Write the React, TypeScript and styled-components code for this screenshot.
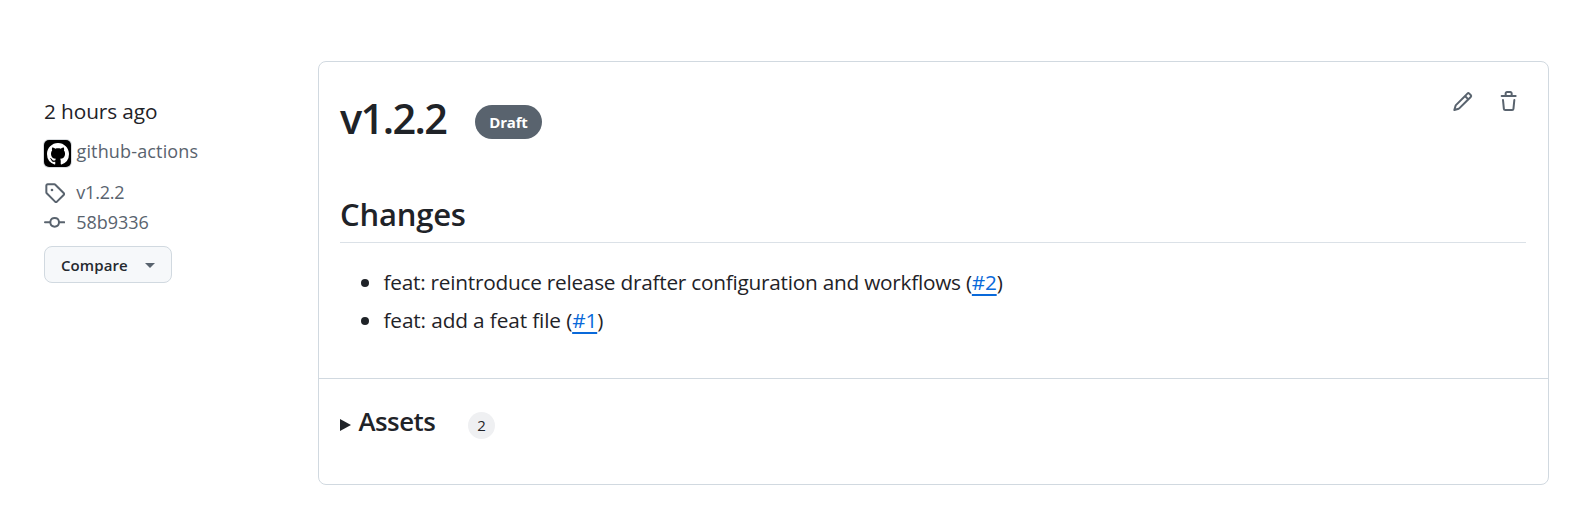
import React from "react";
import styled, { createGlobalStyle } from "styled-components";

const GlobalStyle = createGlobalStyle`
  * { box-sizing: border-box; }
  body {
    margin: 0;
    background: #fff;
    color: #1f2328;
    font-family: "Open Sans", "Noto Sans", sans-serif;
    font-size: 20.8px;
  }
`;

const Page = styled.main`
  display: flex;
  width: 1588px;
  height: 514px;
  padding: 61px 39px 0 44px;
`;

const Sidebar = styled.aside`
  width: 274px;
  flex: none;
  padding-top: 35px;
`;

const Time = styled.div`
  line-height: 30px;
  letter-spacing: -0.1px;
`;

const MetaRow = styled.div<{ $top?: number; $spacing?: number }>`
  display: flex;
  align-items: flex-start;
  gap: 11px;
  height: 29px;
  margin-top: ${(p) => p.$top ?? 0}px;
  color: #59636e;
  font-size: 18px;
  line-height: 28px;
  letter-spacing: ${(p) => p.$spacing ?? 0}px;

  svg {
    flex: none;
    margin-top: 4px;
  }
`;

const AuthorRow = styled(MetaRow)`
  gap: 5.5px;
`;

const Avatar = styled.span`
  display: flex;
  align-items: center;
  justify-content: center;
  flex: none;
  width: 27px;
  height: 27px;
  margin-top: 3px;
  border-radius: 5px;
  background: #000;
  box-shadow: 0 0 0 1px #d8dbde;
  color: #fff;

  svg {
    margin: 0;
  }
`;

const CompareButton = styled.button`
  display: flex;
  align-items: center;
  width: 128px;
  height: 37px;
  margin-top: 9px;
  padding: 1px 16px 0;
  border: 1px solid #d1d9e0;
  border-radius: 8px;
  background: #f6f8fa;
  color: #25292e;
  font: 600 15px/24px "Open Sans", "Noto Sans", sans-serif;
  letter-spacing: 0.1px;
  white-space: nowrap;
`;

const Caret = styled.span`
  margin-left: auto;
  margin-top: 1px;
  border: 5.5px solid transparent;
  border-top-color: #59636e;
  border-bottom: 0;
`;

const Card = styled.section`
  flex: none;
  width: 1231px;
  height: 424px;
  border: 1px solid #d1d9e0;
  border-radius: 8px;
`;

const Body = styled.div`
  height: 317px;
  padding: 0 22px 0 21px;
  border-bottom: 1px solid #d1d9e0;
`;

const Header = styled.header`
  display: flex;
  padding-top: 26px;
`;

const Title = styled.h1`
  margin: 0;
  width: 135px;
  font-size: 41.5px;
  font-weight: 600;
  line-height: 60px;
  letter-spacing: -1.6px;
`;

const DraftLabel = styled.span`
  display: flex;
  align-items: center;
  justify-content: center;
  width: 67px;
  height: 34px;
  margin-top: 17px;
  border-radius: 17px;
  background: #59636e;
  color: #fff;
  font-size: 15px;
  font-weight: 700;
  letter-spacing: -0.2px;
`;

const Actions = styled.div`
  display: flex;
  gap: 24px;
  margin-left: auto;
  padding: 3px 7px 0 0;
  color: #59636e;
`;

const SectionTitle = styled.h2`
  margin: 42px 0 0;
  height: 53px;
  border-bottom: 1px solid #dbe1e7;
  font-size: 31px;
  font-weight: 600;
  line-height: 48px;
  letter-spacing: -0.2px;
`;

const ChangeList = styled.ul`
  margin: 20px 0 0;
  padding: 0;
  list-style: none;
`;

const Change = styled.li<{ $spacing: number }>`
  display: flex;
  align-items: center;
  height: 38px;
  line-height: 38px;
  letter-spacing: ${(p) => p.$spacing}px;
  white-space: pre;

  &::before {
    content: "";
    width: 8px;
    height: 8px;
    margin: 2px 14.5px 0 21px;
    border-radius: 50%;
    background: #1f2328;
  }
`;

const IssueLink = styled.a`
  color: #0969da;
  text-decoration: underline;
  text-decoration-thickness: 2px;
  text-decoration-skip-ink: none;
  text-underline-offset: 4px;
`;

const Assets = styled.div`
  display: flex;
  align-items: flex-start;
  padding: 22px 0 0 21px;
`;

const Disclosure = styled.span`
  margin: 18px 7.5px 0 0;
  border: 6.5px solid transparent;
  border-left: 11px solid #1f2328;
  border-right: 0;
`;

const AssetsTitle = styled.h3`
  margin: 0;
  width: 109.5px;
  font-size: 25.8px;
  font-weight: 600;
  line-height: 40px;
  letter-spacing: -0.5px;
`;

const Counter = styled.span`
  width: 27px;
  height: 27px;
  margin-top: 11px;
  border-radius: 50%;
  background: #eff0f2;
  font-size: 15px;
  font-weight: 500;
  line-height: 27px;
  text-align: center;
`;

const icons = {
  mark: "M8 0c4.42 0 8 3.58 8 8a8.013 8.013 0 0 1-5.45 7.59c-.4.08-.55-.17-.55-.38 0-.27.01-1.13.01-2.2 0-.75-.25-1.23-.54-1.48 1.78-.2 3.65-.88 3.65-3.95 0-.88-.31-1.59-.82-2.15.08-.2.36-1.02-.08-2.12 0 0-.67-.22-2.2.82-.64-.18-1.32-.27-2-.27-.68 0-1.36.09-2 .27-1.53-1.03-2.2-.82-2.2-.82-.44 1.1-.16 1.92-.08 2.12-.51.56-.82 1.28-.82 2.15 0 3.06 1.86 3.75 3.64 3.95-.23.2-.44.55-.51 1.07-.46.21-1.61.55-2.33-.66-.15-.24-.6-.83-1.23-.82-.67.01-.27.38.01.53.34.19.73.9.82 1.13.16.45.68 1.31 2.69.94 0 .67.01 1.3.01 1.49 0 .21-.15.45-.55.38A7.995 7.995 0 0 1 0 8c0-4.42 3.58-8 8-8Z",
  tag: "M1 7.775V2.75C1 1.784 1.784 1 2.75 1h5.025c.464 0 .91.184 1.238.513l6.25 6.25a1.75 1.75 0 0 1 0 2.474l-5.026 5.026a1.75 1.75 0 0 1-2.474 0l-6.25-6.25A1.752 1.752 0 0 1 1 7.775Zm1.5 0c0 .066.026.13.073.177l6.25 6.25a.25.25 0 0 0 .354 0l5.025-5.025a.25.25 0 0 0 0-.354l-6.25-6.25a.25.25 0 0 0-.177-.073H2.75a.25.25 0 0 0-.25.25ZM6 5a1 1 0 1 1 0 2 1 1 0 0 1 0-2Z",
  commit: "M11.93 8.5a4.002 4.002 0 0 1-7.86 0H.75a.75.75 0 0 1 0-1.5h3.32a4.002 4.002 0 0 1 7.86 0h3.32a.75.75 0 0 1 0 1.5Zm-1.43-.75a2.5 2.5 0 1 0-5 0 2.5 2.5 0 0 0 5 0Z",
  pencil: "M11.013 1.427a1.75 1.75 0 0 1 2.474 0l1.086 1.086a1.75 1.75 0 0 1 0 2.474l-8.61 8.61c-.21.21-.47.364-.756.445l-3.251.93a.75.75 0 0 1-.927-.928l.929-3.25c.081-.286.235-.547.445-.758l8.61-8.61Zm.176 4.823L9.75 4.81l-6.286 6.287a.253.253 0 0 0-.064.108l-.558 1.953 1.953-.558a.253.253 0 0 0 .108-.064Zm1.238-3.763a.25.25 0 0 0-.354 0L10.811 3.75l1.439 1.44 1.263-1.263a.25.25 0 0 0 0-.354Z",
  trash: "M11 1.75V3h2.25a.75.75 0 0 1 0 1.5H2.75a.75.75 0 0 1 0-1.5H5V1.75C5 .784 5.784 0 6.75 0h2.5C10.216 0 11 .784 11 1.75ZM4.496 6.675l.66 6.6a.25.25 0 0 0 .249.225h5.19a.25.25 0 0 0 .249-.225l.66-6.6a.75.75 0 0 1 1.492.149l-.66 6.6A1.748 1.748 0 0 1 10.595 15h-5.19a1.75 1.75 0 0 1-1.741-1.575l-.66-6.6a.75.75 0 1 1 1.492-.15ZM6.5 1.75V3h3V1.75a.25.25 0 0 0-.25-.25h-2.5a.25.25 0 0 0-.25.25Z",
};

function Icon({ name, size = 21.33 }: { name: keyof typeof icons; size?: number }) {
  return (
    <svg width={size} height={size} viewBox="0 0 16 16" fill="currentColor" aria-hidden="true">
      <path d={icons[name]} />
    </svg>
  );
}

export default function App() {
  return (
    <>
      <GlobalStyle />
      <Page>
        <Sidebar>
          <Time>2 hours ago</Time>
          <AuthorRow $top={11} $spacing={0.15}>
            <Avatar>
              <Icon name="mark" size={22} />
            </Avatar>
            <span>github-actions</span>
          </AuthorRow>
          <MetaRow $top={12} $spacing={-0.2}>
            <Icon name="tag" />
            <span>v1.2.2</span>
          </MetaRow>
          <MetaRow $top={1} $spacing={-0.05}>
            <Icon name="commit" />
            <span>58b9336</span>
          </MetaRow>
          <CompareButton>
            Compare
            <Caret />
          </CompareButton>
        </Sidebar>
        <Card>
          <Body>
            <Header>
              <Title>v1.2.2</Title>
              <DraftLabel>Draft</DraftLabel>
              <Actions>
                <Icon name="pencil" />
                <Icon name="trash" />
              </Actions>
            </Header>
            <SectionTitle>Changes</SectionTitle>
            <ChangeList>
              <Change $spacing={-0.245}>
                <span>
                  feat: reintroduce release drafter configuration and workflows (
                  <IssueLink>#2</IssueLink>)
                </span>
              </Change>
              <Change $spacing={-0.13}>
                <span>
                  feat: add a feat file (<IssueLink>#1</IssueLink>)
                </span>
              </Change>
            </ChangeList>
          </Body>
          <Assets>
            <Disclosure />
            <AssetsTitle>Assets</AssetsTitle>
            <Counter>2</Counter>
          </Assets>
        </Card>
      </Page>
    </>
  );
}
